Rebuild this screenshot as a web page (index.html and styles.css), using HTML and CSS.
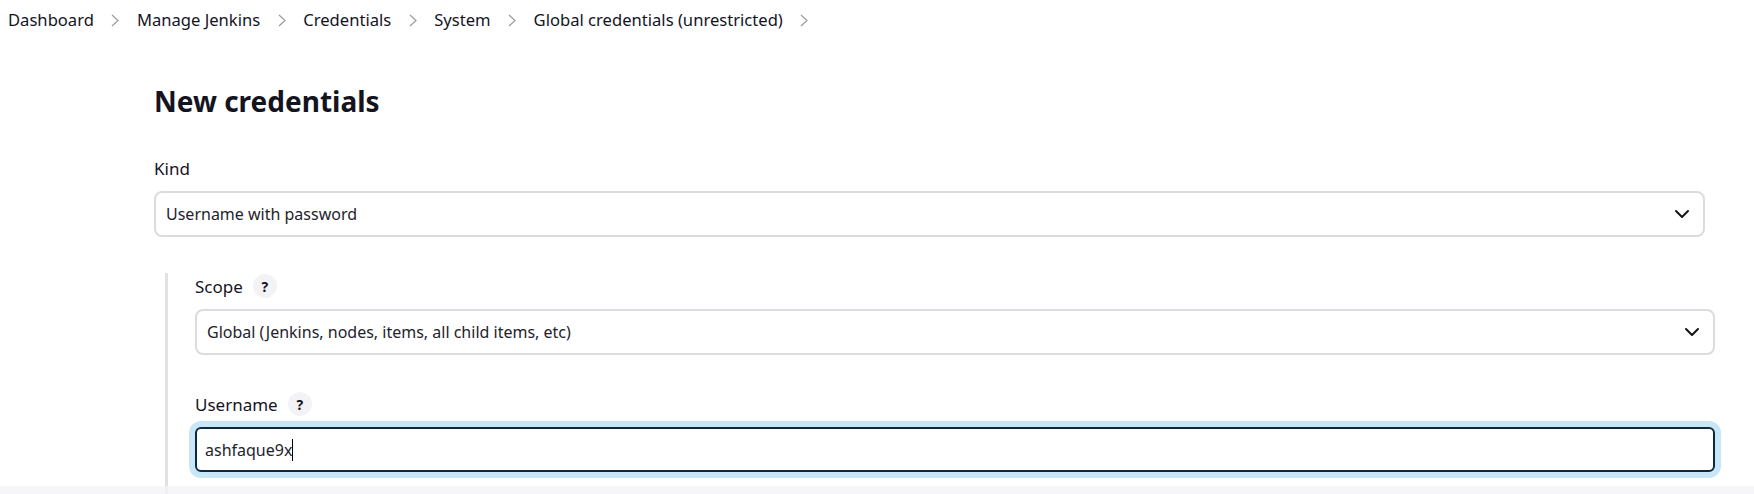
FILE: index.html
```html
<!doctype html>
<html lang="en">
<head>
    <meta charset="UTF-8">
    <meta name="viewport" content="width=device-width, initial-scale=1.0">
    <title>New credentials</title>
    <link rel="stylesheet" href="styles.css">
</head>
<body>
<nav class="breadcrumbs">
    <ol class="crumbs">
        <li class="crumb">Dashboard</li>
        <li class="crumb_sep"><svg width="8" height="13" viewBox="0 0 8 13"><path d="M1,1l6,5.5l-6,5.5"/></svg></li>
        <li class="crumb">Manage Jenkins</li>
        <li class="crumb_sep"><svg width="8" height="13" viewBox="0 0 8 13"><path d="M1,1l6,5.5l-6,5.5"/></svg></li>
        <li class="crumb">Credentials</li>
        <li class="crumb_sep"><svg width="8" height="13" viewBox="0 0 8 13"><path d="M1,1l6,5.5l-6,5.5"/></svg></li>
        <li class="crumb">System</li>
        <li class="crumb_sep"><svg width="8" height="13" viewBox="0 0 8 13"><path d="M1,1l6,5.5l-6,5.5"/></svg></li>
        <li class="crumb">Global credentials (unrestricted)</li>
        <li class="crumb_sep"><svg width="8" height="13" viewBox="0 0 8 13"><path d="M1,1l6,5.5l-6,5.5"/></svg></li>
    </ol>
</nav>
<main class="main">
    <h1 class="title">New credentials</h1>
    <div class="field">
        <div class="field_label">Kind</div>
        <div class="select">
            <span class="select_text">Username with password</span>
            <svg class="select_arrow" width="16" height="10" viewBox="0 0 16 10"><path d="M2,2l6,6l6,-6"/></svg>
        </div>
    </div>
    <div class="nested">
        <div class="field">
            <div class="field_label">Scope <span class="help">?</span></div>
            <div class="select">
                <span class="select_text">Global (Jenkins, nodes, items, all child items, etc)</span>
                <svg class="select_arrow" width="16" height="10" viewBox="0 0 16 10"><path d="M2,2l6,6l6,-6"/></svg>
            </div>
        </div>
        <div class="field">
            <div class="field_label">Username <span class="help">?</span></div>
            <div class="textbox textbox_focus">
                <span class="select_text">ashfaque9x</span><span class="caret"></span>
            </div>
        </div>
    </div>
</main>
<div class="bottom_bar"></div>
</body>
</html>
```

FILE: styles.css
```css
* {
    margin: 0;
    padding: 0;
    box-sizing: border-box;
}

body {
    font-family: "Noto Sans", "Open Sans", sans-serif;
    color: #14141f;
    background-color: #ffffff;
    min-height: 494px;
    overflow: hidden;
}

.breadcrumbs {
    display: flex;
    align-items: center;
    height: 40px;
    padding-left: 8px;
}

.crumbs {
    display: flex;
    align-items: center;
    gap: 17.5px;
    list-style: none;
}

.crumb {
    font-size: 16.6px;
    line-height: 24px;
}

.crumb_sep {
    display: flex;
    align-items: center;
}

.crumb_sep svg {
    fill: none;
    stroke: #9a9aa0;
    stroke-width: 1.2;
}

.main {
    padding: 0 49px 0 154px;
}

.title {
    margin-top: 43px;
    font-size: 28px;
    line-height: 36px;
    font-weight: 700;
}

.field {
    margin-top: 37px;
}

.nested .field:first-child {
    margin-top: 0;
}

.field_label {
    display: flex;
    align-items: center;
    gap: 10px;
    height: 24px;
    margin-bottom: 11px;
    font-size: 17px;
}

.help {
    display: flex;
    justify-content: center;
    align-items: center;
    width: 24px;
    height: 24px;
    border-radius: 50%;
    background-color: #f3f3f5;
    font-size: 14px;
    font-weight: 700;
}

.select,
.textbox {
    display: flex;
    justify-content: space-between;
    align-items: center;
    height: 46px;
    padding: 0 13px 0 10px;
    border: 2px solid #dcdce0;
    border-radius: 8px;
    background-color: #ffffff;
}

.select_text {
    font-size: 16px;
    color: #23232c;
}

.select_arrow {
    fill: none;
    stroke: #14141f;
    stroke-width: 2;
    stroke-linecap: round;
    stroke-linejoin: round;
}

.nested {
    margin: 36px -10px 0 11px;
    padding: 1px 0 200px 27px;
    border-left: 3px solid #e2e2e5;
}

.textbox {
    justify-content: flex-start;
    padding-left: 8px;
}

.textbox_focus {
    height: 45px;
    border-color: #0b2a3f;
    border-radius: 6px;
    box-shadow: 0 0 0 6px #c8e6f6;
}

.caret {
    width: 1px;
    height: 22px;
    background-color: #000000;
}

.bottom_bar {
    position: fixed;
    left: 0;
    right: 0;
    bottom: 0;
    height: 8px;
    background-color: rgba(244, 244, 246, 0.8);
}
```
